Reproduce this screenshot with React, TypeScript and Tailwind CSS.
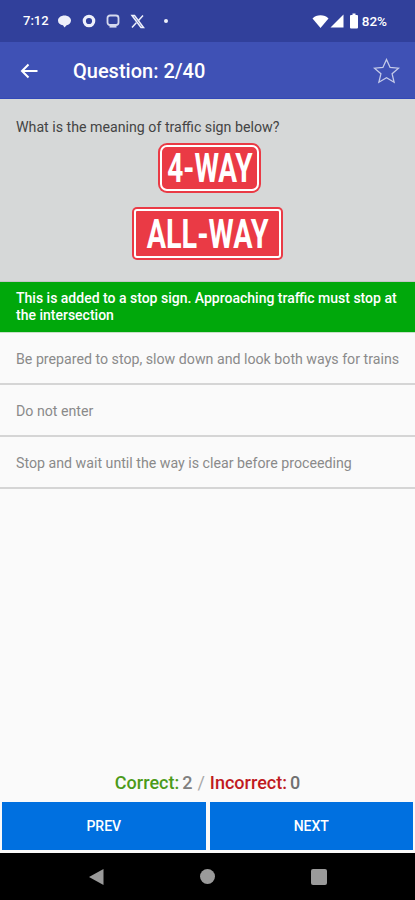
import React from 'react';

const options = [
  'Be prepared to stop, slow down and look both ways for trains',
  'Do not enter',
  'Stop and wait until the way is clear before proceeding',
];

const StatusBar: React.FC = () => (
  <div className="h-[42px] bg-[#31409b] flex items-center justify-between pl-[23px] pr-[28px] text-white text-[13px] font-medium">
    <div className="flex items-center">
      <span className="w-[26px]">7:12</span>
      <div className="flex items-center gap-[10px] ml-[8px]">
        <svg width="15" height="15" viewBox="0 0 15 15" fill="#eef0fa">
          <path d="M7.5 1.5c3.6 0 6.5 2.2 6.5 5s-2.2 4.4-4.4 4.7L7.5 13.6 6 11.3C3.200 11 1 9.300 1 6.500c0-2.800 2.900-5 6.500-5z" />
        </svg>
        <svg width="14" height="14" viewBox="0 0 14 14">
          <circle cx="7" cy="7" r="4.700" fill="none" stroke="#eef0fa" strokeWidth="3.200" />
        </svg>
        <svg width="14" height="14" viewBox="0 0 14 14" fill="none" stroke="#d5d9ee" strokeWidth="1.800">
          <rect x="1.500" y="1.500" width="11" height="9.500" rx="2.500" />
          <path d="M3.500 12.700h7" />
        </svg>
        <svg width="15" height="15" viewBox="0 0 15 15" fill="none" stroke="#eef0fa">
          <path d="M2 1.500l9 12h2.500l-9-12z" strokeWidth="1.500" />
          <path d="M13 1.500L8.500 6.500M6.300 8.800L2 13.500" strokeWidth="1.500" />
        </svg>
        <div className="w-[4px] h-[4px] bg-[#eef0fa] rounded-full ml-[9px]" />
      </div>
    </div>
    <div className="flex items-center">
      <svg width="17" height="13" viewBox="0 0 17 13" fill="#fff">
        <path d="M8.500 13L0.500 3.500C2.500 1.500 5.300 0.300 8.500 0.300S14.500 1.500 16.500 3.500z" />
      </svg>
      <svg width="14" height="14" viewBox="0 0 14 14" fill="#fff" className="ml-[1px]">
        <path d="M13.500 0.500V13.500H0.500z" />
      </svg>
      <svg width="10" height="16" viewBox="0 0 10 16" fill="#fff" className="ml-[5px]">
        <path d="M3.500 0.500h3v1.500h1.500a1 1 0 0 1 1 1v11.500a1 1 0 0 1-1 1H2a1 1 0 0 1-1-1V3a1 1 0 0 1 1-1h1.500z" />
      </svg>
      <span className="ml-[3px] text-[13.500px]">82%</span>
    </div>
  </div>
);

const Header: React.FC = () => (
  <div className="h-[57px] bg-[#3f51b5] border-b border-[#3248b8] flex items-center pl-[20px] pr-[15px] pt-[2px] text-white">
    <svg width="18" height="16" viewBox="0 0 18 16" fill="none" stroke="#fff" strokeWidth="2">
      <path d="M17.500 8H2M8.500 1.500L2 8l6.500 6.500" />
    </svg>
    <span className="ml-[35px] text-[20px] font-medium">Question: 2/40</span>
    <svg width="27" height="26" viewBox="0 0 27 26" fill="none" stroke="#c5cbe9" strokeWidth="1.300" className="ml-auto">
      <path d="M13.500 1.500l3.600 8 8.400.7-6.400 5.600 2 8.400-7.600-4.500-7.600 4.500 2-8.400L1.500 10.200l8.400-.7z" />
    </svg>
  </div>
);

const Sign: React.FC<{ label: string; wide?: boolean }> = ({ label, wide }) => (
  <div className={wide ? 'bg-[#ea3a45] rounded-[5px] p-[2px] w-[151px] h-[53px]' : 'bg-[#ea3a45] rounded-[9px] p-[2px] w-[103px] h-[50px]'}>
    <div className={wide ? 'w-full h-full border-2 border-white rounded-[3px] flex items-center justify-center overflow-hidden pt-[2px]' : 'w-full h-full border-2 border-white rounded-[7px] flex items-center justify-center overflow-hidden pt-[2px]'}>
      <span className={wide ? 'text-white font-bold text-[40px] leading-none scale-x-[0.72] whitespace-nowrap' : 'text-white font-bold text-[40px] leading-none scale-x-[0.7] whitespace-nowrap'}>
        {label}
      </span>
    </div>
  </div>
);

const App: React.FC = () => {
  return (
    <div className="w-[415px] h-[900px] flex flex-col bg-[#fafafa] overflow-hidden font-['Roboto',sans-serif]">
      <StatusBar />
      <Header />

      <div className="h-[183px] bg-[#d6d8d8] border-b border-[#c4c6c6] pt-[19px] flex flex-col items-center">
        <p className="w-full pl-[16px] text-[14.200px] leading-[18px] text-[#444444]">What is the meaning of traffic sign below?</p>
        <div className="mt-[7px] ml-[4px]"><Sign label="4-WAY" /></div>
        <div className="mt-[14px]"><Sign label="ALL-WAY" wide /></div>
      </div>

      <div className="h-[51px] bg-[#00a80b] border-b border-[#c8e0c8] px-[16px] flex items-center text-white text-[14px] leading-[17px] font-medium">
        This is added to a stop sign. Approaching traffic must stop at the intersection
      </div>

      {options.map((text) => (
        <div key={text} className="h-[52px] border-b-2 border-[#d5d5d5] px-[16px] pt-[3px] flex items-center text-[14.200px] text-[#8a8a8a] whitespace-nowrap">
          {text}
        </div>
      ))}

      <div className="mt-auto flex flex-col">
        <div className="flex items-center justify-center text-[18px] font-medium leading-[20px] mb-[9px]">
          <span className="text-[#4c9a1a]">Correct:</span>
          <span className="text-[#808080] ml-[3px]">2</span>
          <span className="text-[#a8a8a8] font-normal ml-[5px]">/</span>
          <span className="text-[#c01a1f] ml-[5px]">Incorrect:</span>
          <span className="text-[#707070] ml-[3px]">0</span>
        </div>
        <div className="flex gap-[4px] px-[2px] pb-[3px]">
          <button className="flex-1 h-[48px] bg-[#0070e0] text-white text-[14px] font-medium pt-[1px]">PREV</button>
          <button className="flex-1 h-[48px] bg-[#0070e0] text-white text-[14px] font-medium pt-[1px]">NEXT</button>
        </div>
        <div className="h-[47px] bg-black flex items-center">
          <svg width="16" height="18" viewBox="0 0 16 18" fill="#9a9a9a" className="ml-[88px]">
            <path d="M15.500 1v16L1 9z" />
          </svg>
          <div className="w-[15px] h-[15px] rounded-full bg-[#9a9a9a] ml-[96px]" />
          <div className="w-[16px] h-[16px] rounded-[2px] bg-[#9a9a9a] ml-[96px]" />
        </div>
      </div>
    </div>
  );
};

export default App;
